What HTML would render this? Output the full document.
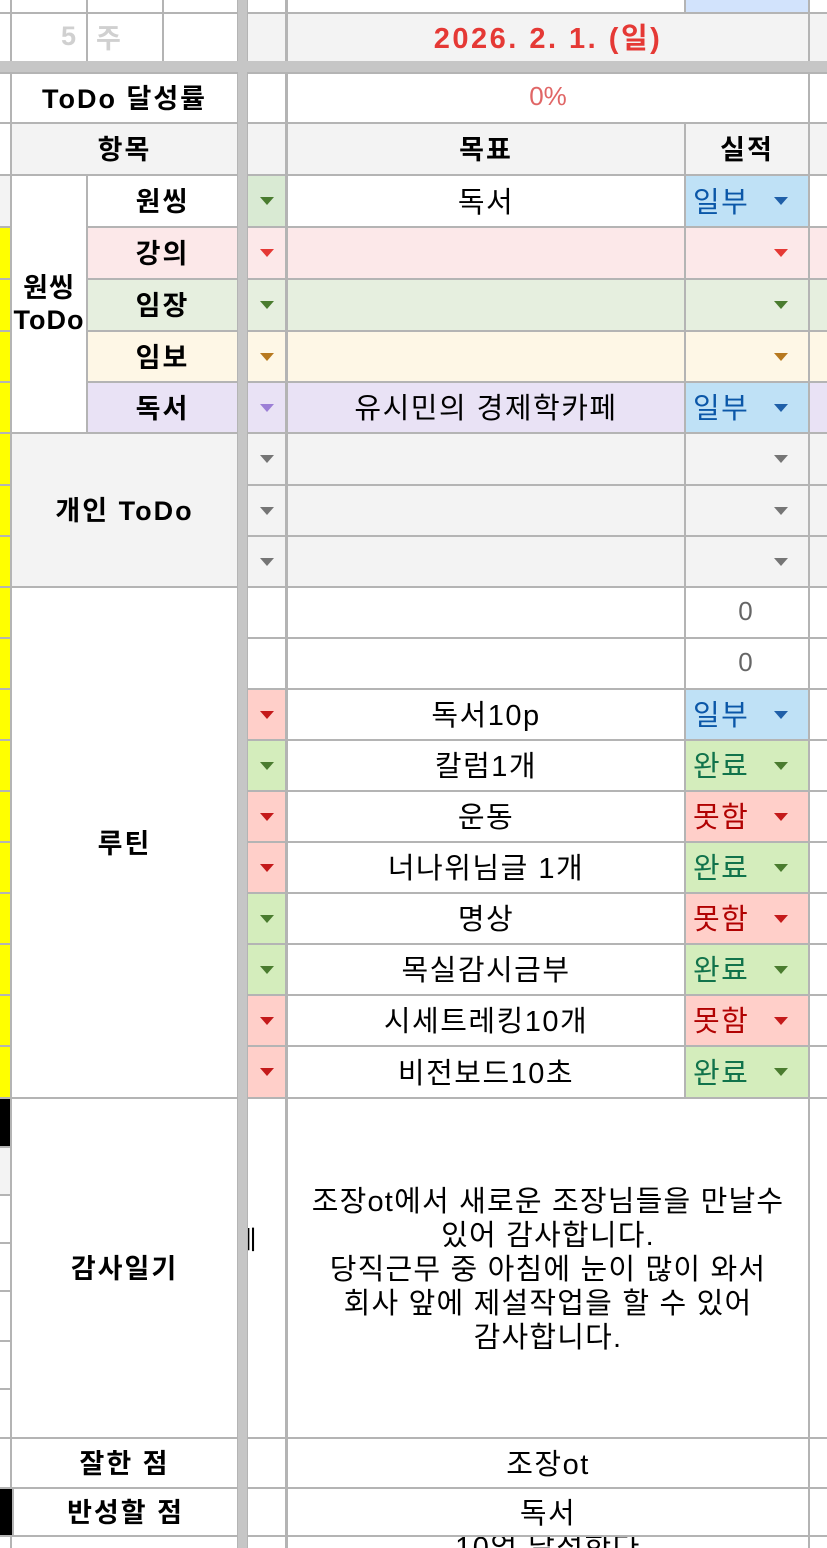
<!DOCTYPE html>
<html><head><meta charset="utf-8">
<style>
*{margin:0;padding:0;box-sizing:border-box}
html,body{width:827px;height:1548px;overflow:hidden}
body{background:#b4b4b4;position:relative;font-family:"Liberation Sans","Noto Sans CJK KR",sans-serif;color:#000}
.c{position:absolute;display:flex;align-items:center;justify-content:center;overflow:hidden;background:#fff;font-size:29px;letter-spacing:1.5px;white-space:nowrap;padding-bottom:3px}
.b{font-weight:bold;font-size:27px;letter-spacing:2px}
.g{background:#f3f3f3}
.ar{display:inline-block;width:0;height:0;border-left:7px solid transparent;border-right:7px solid transparent;border-top:8px solid #757575;margin-top:3px}
.chip{justify-content:flex-start;padding-left:7px}
.chip .ar{position:absolute;left:88px;top:21px;margin:0}
.bar{position:absolute;background:#c6c6c6}
</style></head><body>
<div class="bar" style="left:0;top:61px;width:827px;height:11px"></div>
<div class="bar" style="left:238px;top:0;width:9px;height:1548px"></div>

<div class="c" style="left:0;top:0;width:10px;height:12px"></div>
<div class="c" style="left:12px;top:0;width:74px;height:12px"></div>
<div class="c" style="left:88px;top:0;width:74px;height:12px"></div>
<div class="c" style="left:164px;top:0;width:73px;height:12px"></div>
<div class="c" style="left:248px;top:0;width:37px;height:12px"></div>
<div class="c" style="left:288px;top:0;width:396px;height:12px"></div>
<div class="c" style="left:686px;top:0;width:122px;height:12px;background:#d2e3fc"></div>
<div class="c" style="left:810px;top:0;width:17px;height:12px"></div>

<div class="c" style="left:0;top:14px;width:10px;height:47px"></div>
<div class="c b" style="left:12px;top:14px;width:74px;height:47px;justify-content:flex-end;padding-right:8px;color:#d0d0d0">5</div>
<div class="c b" style="left:88px;top:14px;width:74px;height:47px;justify-content:flex-start;padding-left:8px;color:#d0d0d0">주</div>
<div class="c" style="left:164px;top:14px;width:73px;height:47px"></div>
<div class="c g" style="left:248px;top:14px;width:37px;height:47px"></div>
<div class="c g b" style="left:288px;top:14px;width:520px;height:47px;color:#e53935;font-size:29px;letter-spacing:2.5px">2026. 2. 1. (일)</div>
<div class="c g" style="left:810px;top:14px;width:17px;height:47px"></div>

<div class="c" style="left:0;top:74px;width:10px;height:48px"></div>
<div class="c b" style="left:12px;top:74px;width:225px;height:48px">ToDo 달성률</div>
<div class="c" style="left:248px;top:74px;width:37px;height:48px"></div>
<div class="c" style="left:288px;top:74px;width:520px;height:48px;color:#e06666;font-size:26px;letter-spacing:0">0%</div>
<div class="c" style="left:810px;top:74px;width:17px;height:48px"></div>

<div class="c" style="left:0;top:124px;width:10px;height:50px"></div>
<div class="c g b" style="left:12px;top:124px;width:225px;height:50px">항목</div>
<div class="c g" style="left:248px;top:124px;width:37px;height:50px"></div>
<div class="c g b" style="left:288px;top:124px;width:396px;height:50px">목표</div>
<div class="c g b" style="left:686px;top:124px;width:122px;height:50px">실적</div>
<div class="c g" style="left:810px;top:124px;width:17px;height:50px"></div>

<div class="c g" style="left:0;top:176px;width:10px;height:50px"></div>
<div class="c" style="left:0;top:228px;width:10px;height:50px;background:#ffff00"></div>
<div class="c" style="left:0;top:280px;width:10px;height:50px;background:#ffff00"></div>
<div class="c" style="left:0;top:332px;width:10px;height:49px;background:#ffff00"></div>
<div class="c" style="left:0;top:383px;width:10px;height:49px;background:#ffff00"></div>
<div class="c" style="left:0;top:434px;width:10px;height:50px;background:#ffff00"></div>
<div class="c" style="left:0;top:486px;width:10px;height:49px;background:#ffff00"></div>
<div class="c" style="left:0;top:537px;width:10px;height:49px;background:#ffff00"></div>
<div class="c" style="left:0;top:588px;width:10px;height:49px;background:#ffff00"></div>
<div class="c" style="left:0;top:639px;width:10px;height:49px;background:#ffff00"></div>
<div class="c" style="left:0;top:690px;width:10px;height:49px;background:#ffff00"></div>
<div class="c" style="left:0;top:741px;width:10px;height:49px;background:#ffff00"></div>
<div class="c" style="left:0;top:792px;width:10px;height:49px;background:#ffff00"></div>
<div class="c" style="left:0;top:843px;width:10px;height:49px;background:#ffff00"></div>
<div class="c" style="left:0;top:894px;width:10px;height:49px;background:#ffff00"></div>
<div class="c" style="left:0;top:945px;width:10px;height:49px;background:#ffff00"></div>
<div class="c" style="left:0;top:996px;width:10px;height:49px;background:#ffff00"></div>
<div class="c" style="left:0;top:1047px;width:10px;height:50px;background:#ffff00"></div>
<div class="c" style="left:0;top:1099px;width:10px;height:47px;background:#000"></div>
<div class="c g" style="left:0;top:1148px;width:10px;height:46px"></div>
<div class="c" style="left:0;top:1196px;width:10px;height:46px"></div>
<div class="c" style="left:0;top:1244px;width:10px;height:46px"></div>
<div class="c" style="left:0;top:1292px;width:10px;height:48px"></div>
<div class="c" style="left:0;top:1342px;width:10px;height:46px"></div>
<div class="c" style="left:0;top:1390px;width:10px;height:47px"></div>
<div class="c" style="left:0;top:1439px;width:10px;height:48px"></div>
<div class="c" style="left:0;top:1489px;width:12px;height:46px;background:#000"></div>
<div class="c" style="left:0;top:1537px;width:10px;height:11px"></div>

<div class="c b" style="left:12px;top:176px;width:74px;height:256px;white-space:normal;text-align:center;line-height:32px;letter-spacing:1px;padding:0">원씽<br>ToDo</div>
<div class="c b" style="left:88px;top:176px;width:149px;height:50px">원씽</div>
<div class="c" style="left:248px;top:176px;width:37px;height:50px;background:#d9ead3"><span class="ar" style="border-top-color:#4a7c2f"></span></div>
<div class="c" style="left:288px;top:176px;width:396px;height:50px">독서</div>
<div class="c chip" style="left:686px;top:176px;width:122px;height:50px;background:#bfe1f6;color:#0b57a8">일부<span class="ar" style="border-top-color:#1f5fa8"></span></div>
<div class="c" style="left:810px;top:176px;width:17px;height:50px"></div>

<div class="c b" style="left:88px;top:228px;width:149px;height:50px;background:#fce8e9">강의</div>
<div class="c" style="left:248px;top:228px;width:37px;height:50px;background:#fce8e9"><span class="ar" style="border-top-color:#e53935"></span></div>
<div class="c" style="left:288px;top:228px;width:396px;height:50px;background:#fce8e9"></div>
<div class="c chip" style="left:686px;top:228px;width:122px;height:50px;background:#fce8e9"><span class="ar" style="border-top-color:#e53935"></span></div>
<div class="c" style="left:810px;top:228px;width:17px;height:50px;background:#fce8e9"></div>

<div class="c b" style="left:88px;top:280px;width:149px;height:50px;background:#e6efdf">임장</div>
<div class="c" style="left:248px;top:280px;width:37px;height:50px;background:#e6efdf"><span class="ar" style="border-top-color:#4a7c2f"></span></div>
<div class="c" style="left:288px;top:280px;width:396px;height:50px;background:#e6efdf"></div>
<div class="c chip" style="left:686px;top:280px;width:122px;height:50px;background:#e6efdf"><span class="ar" style="border-top-color:#4a7c2f"></span></div>
<div class="c" style="left:810px;top:280px;width:17px;height:50px;background:#e6efdf"></div>

<div class="c b" style="left:88px;top:332px;width:149px;height:49px;background:#fef7e6">임보</div>
<div class="c" style="left:248px;top:332px;width:37px;height:49px;background:#fef7e6"><span class="ar" style="border-top-color:#b7791f"></span></div>
<div class="c" style="left:288px;top:332px;width:396px;height:49px;background:#fef7e6"></div>
<div class="c chip" style="left:686px;top:332px;width:122px;height:49px;background:#fef7e6"><span class="ar" style="border-top-color:#b7791f"></span></div>
<div class="c" style="left:810px;top:332px;width:17px;height:49px;background:#fef7e6"></div>

<div class="c b" style="left:88px;top:383px;width:149px;height:49px;background:#e9e2f5">독서</div>
<div class="c" style="left:248px;top:383px;width:37px;height:49px;background:#e9e2f5"><span class="ar" style="border-top-color:#9c7fd6"></span></div>
<div class="c" style="left:288px;top:383px;width:396px;height:49px;background:#e9e2f5">유시민의 경제학카페</div>
<div class="c chip" style="left:686px;top:383px;width:122px;height:49px;background:#bfe1f6;color:#0b57a8">일부<span class="ar" style="border-top-color:#1f5fa8"></span></div>
<div class="c" style="left:810px;top:383px;width:17px;height:49px;background:#e9e2f5"></div>

<div class="c g b" style="left:12px;top:434px;width:225px;height:152px">개인 ToDo</div>
<div class="c g" style="left:248px;top:434px;width:37px;height:50px"><span class="ar"></span></div>
<div class="c g" style="left:288px;top:434px;width:396px;height:50px"></div>
<div class="c g chip" style="left:686px;top:434px;width:122px;height:50px"><span class="ar"></span></div>
<div class="c g" style="left:810px;top:434px;width:17px;height:50px"></div>
<div class="c g" style="left:248px;top:486px;width:37px;height:49px"><span class="ar"></span></div>
<div class="c g" style="left:288px;top:486px;width:396px;height:49px"></div>
<div class="c g chip" style="left:686px;top:486px;width:122px;height:49px"><span class="ar"></span></div>
<div class="c g" style="left:810px;top:486px;width:17px;height:49px"></div>
<div class="c g" style="left:248px;top:537px;width:37px;height:49px"><span class="ar"></span></div>
<div class="c g" style="left:288px;top:537px;width:396px;height:49px"></div>
<div class="c g chip" style="left:686px;top:537px;width:122px;height:49px"><span class="ar"></span></div>
<div class="c g" style="left:810px;top:537px;width:17px;height:49px"></div>

<div class="c b" style="left:12px;top:588px;width:225px;height:509px">루틴</div>

<div class="c" style="left:248px;top:588px;width:37px;height:49px"></div>
<div class="c" style="left:288px;top:588px;width:396px;height:49px"></div>
<div class="c" style="left:686px;top:588px;width:122px;height:49px;color:#666;font-size:26px;letter-spacing:0;padding-right:3px">0</div>
<div class="c" style="left:810px;top:588px;width:17px;height:49px"></div>

<div class="c" style="left:248px;top:639px;width:37px;height:49px"></div>
<div class="c" style="left:288px;top:639px;width:396px;height:49px"></div>
<div class="c" style="left:686px;top:639px;width:122px;height:49px;color:#666;font-size:26px;letter-spacing:0;padding-right:3px">0</div>
<div class="c" style="left:810px;top:639px;width:17px;height:49px"></div>

<div class="c" style="left:248px;top:690px;width:37px;height:49px;background:#ffcfc9"><span class="ar" style="border-top-color:#c41a1a"></span></div>
<div class="c" style="left:288px;top:690px;width:396px;height:49px">독서10p</div>
<div class="c chip" style="left:686px;top:690px;width:122px;height:49px;background:#bfe1f6;color:#0b57a8">일부<span class="ar" style="border-top-color:#1f5fa8"></span></div>
<div class="c" style="left:810px;top:690px;width:17px;height:49px"></div>

<div class="c" style="left:248px;top:741px;width:37px;height:49px;background:#d4edbc"><span class="ar" style="border-top-color:#4a7c2f"></span></div>
<div class="c" style="left:288px;top:741px;width:396px;height:49px">칼럼1개</div>
<div class="c chip" style="left:686px;top:741px;width:122px;height:49px;background:#d4edbc;color:#11734b">완료<span class="ar" style="border-top-color:#4a7c2f"></span></div>
<div class="c" style="left:810px;top:741px;width:17px;height:49px"></div>

<div class="c" style="left:248px;top:792px;width:37px;height:49px;background:#ffcfc9"><span class="ar" style="border-top-color:#c41a1a"></span></div>
<div class="c" style="left:288px;top:792px;width:396px;height:49px">운동</div>
<div class="c chip" style="left:686px;top:792px;width:122px;height:49px;background:#ffcfc9;color:#b10202">못함<span class="ar" style="border-top-color:#c41a1a"></span></div>
<div class="c" style="left:810px;top:792px;width:17px;height:49px"></div>

<div class="c" style="left:248px;top:843px;width:37px;height:49px;background:#ffcfc9"><span class="ar" style="border-top-color:#c41a1a"></span></div>
<div class="c" style="left:288px;top:843px;width:396px;height:49px">너나위님글 1개</div>
<div class="c chip" style="left:686px;top:843px;width:122px;height:49px;background:#d4edbc;color:#11734b">완료<span class="ar" style="border-top-color:#4a7c2f"></span></div>
<div class="c" style="left:810px;top:843px;width:17px;height:49px"></div>

<div class="c" style="left:248px;top:894px;width:37px;height:49px;background:#d4edbc"><span class="ar" style="border-top-color:#4a7c2f"></span></div>
<div class="c" style="left:288px;top:894px;width:396px;height:49px">명상</div>
<div class="c chip" style="left:686px;top:894px;width:122px;height:49px;background:#ffcfc9;color:#b10202">못함<span class="ar" style="border-top-color:#c41a1a"></span></div>
<div class="c" style="left:810px;top:894px;width:17px;height:49px"></div>

<div class="c" style="left:248px;top:945px;width:37px;height:49px;background:#d4edbc"><span class="ar" style="border-top-color:#4a7c2f"></span></div>
<div class="c" style="left:288px;top:945px;width:396px;height:49px">목실감시금부</div>
<div class="c chip" style="left:686px;top:945px;width:122px;height:49px;background:#d4edbc;color:#11734b">완료<span class="ar" style="border-top-color:#4a7c2f"></span></div>
<div class="c" style="left:810px;top:945px;width:17px;height:49px"></div>

<div class="c" style="left:248px;top:996px;width:37px;height:49px;background:#ffcfc9"><span class="ar" style="border-top-color:#c41a1a"></span></div>
<div class="c" style="left:288px;top:996px;width:396px;height:49px">시세트레킹10개</div>
<div class="c chip" style="left:686px;top:996px;width:122px;height:49px;background:#ffcfc9;color:#b10202">못함<span class="ar" style="border-top-color:#c41a1a"></span></div>
<div class="c" style="left:810px;top:996px;width:17px;height:49px"></div>

<div class="c" style="left:248px;top:1047px;width:37px;height:50px;background:#ffcfc9"><span class="ar" style="border-top-color:#c41a1a"></span></div>
<div class="c" style="left:288px;top:1047px;width:396px;height:50px">비전보드10초</div>
<div class="c chip" style="left:686px;top:1047px;width:122px;height:50px;background:#d4edbc;color:#11734b">완료<span class="ar" style="border-top-color:#4a7c2f"></span></div>
<div class="c" style="left:810px;top:1047px;width:17px;height:50px"></div>

<div class="c b" style="left:12px;top:1099px;width:225px;height:338px">감사일기</div>
<div class="c" style="left:248px;top:1099px;width:37px;height:338px;justify-content:flex-start;padding-bottom:60px;font-size:26px"><span style="margin-left:-11px">ㅔ</span></div>
<div class="c" style="left:288px;top:1099px;width:520px;height:338px;white-space:normal;text-align:center;line-height:34px;padding:4px 0 0 0;letter-spacing:1.2px">조장ot에서 새로운 조장님들을 만날수<br>있어 감사합니다.<br>당직근무 중 아침에 눈이 많이 와서<br>회사 앞에 제설작업을 할 수 있어<br>감사합니다.</div>
<div class="c" style="left:810px;top:1099px;width:17px;height:338px"></div>

<div class="c b" style="left:12px;top:1439px;width:225px;height:48px">잘한 점</div>
<div class="c" style="left:248px;top:1439px;width:37px;height:48px"></div>
<div class="c" style="left:288px;top:1439px;width:520px;height:48px">조장ot</div>
<div class="c" style="left:810px;top:1439px;width:17px;height:48px"></div>

<div class="c b" style="left:14px;top:1489px;width:223px;height:46px">반성할 점</div>
<div class="c" style="left:248px;top:1489px;width:37px;height:46px"></div>
<div class="c" style="left:288px;top:1489px;width:520px;height:46px">독서</div>
<div class="c" style="left:810px;top:1489px;width:17px;height:46px"></div>

<div class="c" style="left:12px;top:1537px;width:225px;height:11px"></div>
<div class="c" style="left:248px;top:1537px;width:37px;height:11px"></div>
<div class="c" style="left:288px;top:1537px;width:520px;height:11px;align-items:flex-start;padding:0"><span style="margin-top:-13px">10억 달성한다</span></div>
<div class="c" style="left:810px;top:1537px;width:17px;height:11px"></div>
</body></html>
